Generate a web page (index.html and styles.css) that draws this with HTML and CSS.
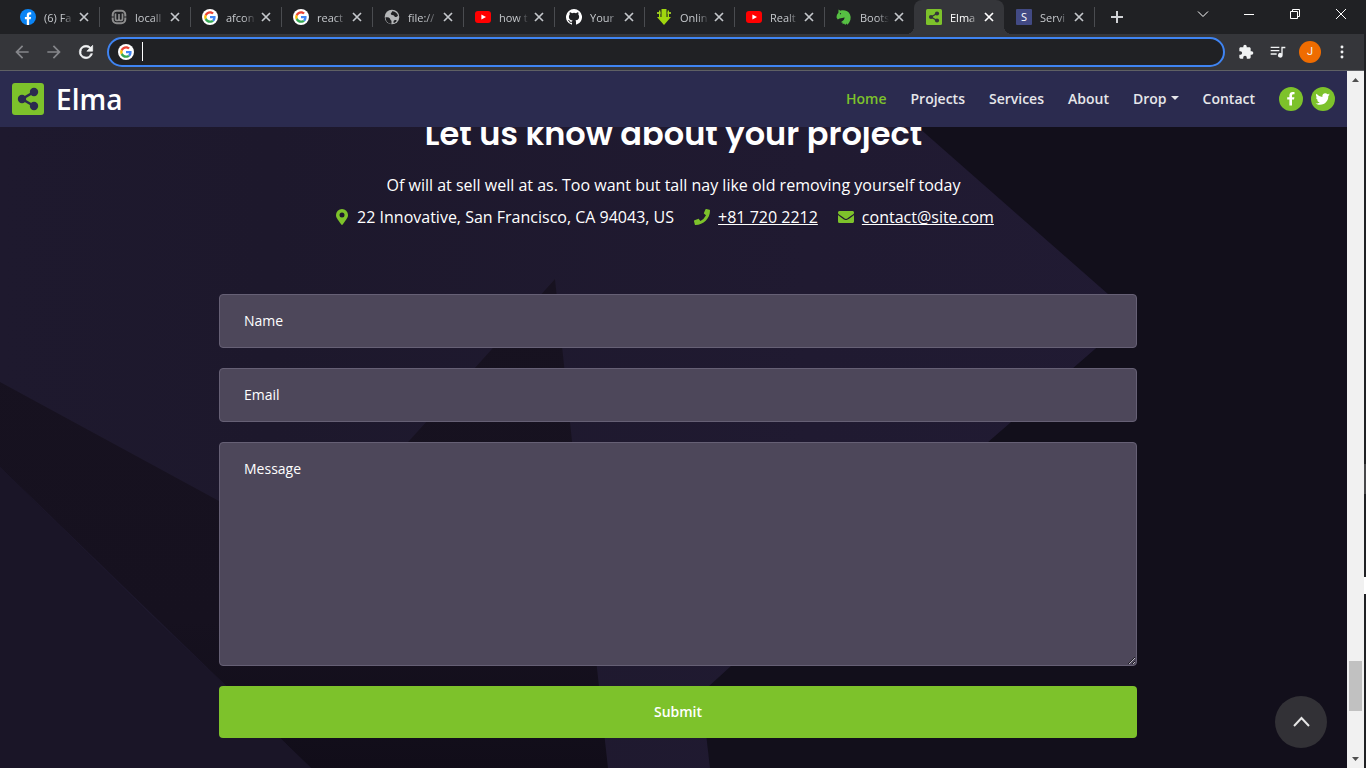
FILE: index.html
```html
<!DOCTYPE html>
<html lang="en">
<head>
<meta charset="utf-8">
<meta name="viewport" content="width=device-width, initial-scale=1">
<title>Elma</title>
<link rel="stylesheet" href="styles.css">
</head>
<body>
<svg class="sprite" aria-hidden="true">
  <symbol id="x" viewBox="0 0 10 10"><path d="M1 1l8 8M9 1l-8 8" fill="none" stroke="currentColor" stroke-width="1.7"/></symbol>
  <symbol id="google" viewBox="0 0 48 48">
    <circle cx="24" cy="24" r="24" fill="#fff"/>
    <g transform="translate(6.5 6.5) scale(.73)">
      <path fill="#EA4335" d="M24 9.5c3.54 0 6.71 1.22 9.21 3.6l6.85-6.85C35.9 2.38 30.47 0 24 0 14.62 0 6.51 5.38 2.56 13.22l7.98 6.19C12.43 13.72 17.74 9.5 24 9.5z"/>
      <path fill="#4285F4" d="M46.98 24.55c0-1.57-.15-3.09-.38-4.55H24v9.02h12.94c-.58 2.96-2.26 5.48-4.78 7.18l7.73 6c4.51-4.18 7.09-10.36 7.09-17.65z"/>
      <path fill="#FBBC05" d="M10.53 28.59c-.48-1.45-.76-2.99-.76-4.59s.27-3.14.76-4.59l-7.98-6.19C.92 16.46 0 20.12 0 24s.92 7.54 2.56 10.78l7.97-6.19z"/>
      <path fill="#34A853" d="M24 48c6.48 0 11.93-2.13 15.89-5.81l-7.73-6c-2.15 1.45-4.92 2.3-8.16 2.3-6.26 0-11.57-4.22-13.47-9.91l-7.98 6.19C6.51 42.62 14.62 48 24 48z"/>
    </g>
  </symbol>
  <symbol id="youtube" viewBox="0 0 16 16"><rect y="2" width="16" height="12" rx="3" fill="#f00"/><path d="M6.4 5.4v5.2L11 8z" fill="#fff"/></symbol>
  <symbol id="share" viewBox="0 0 32 32">
    <rect width="32" height="32" rx="3" fill="#7dc22b"/>
    <path d="M22 9L10 16l12 7" fill="none" stroke="currentColor" stroke-width="2.6"/>
    <circle cx="22" cy="9" r="4.2" fill="currentColor"/><circle cx="10" cy="16" r="4.2" fill="currentColor"/><circle cx="22" cy="23" r="4.2" fill="currentColor"/>
  </symbol>
</svg>

<div class="window">
  <div class="browser">
    <div class="tabstrip">
      <div class="tabs">
        <div class="tab"><svg class="favicon" viewBox="0 0 16 16"><circle cx="8" cy="8" r="8" fill="#0a84f5"/><path d="M6.8 16V10.300H4.900V8h1.900V6.300c0-2 1.100-3 2.900-3 .6 0 1.200.1 1.500.2v1.900h-.9c-.9 0-1.200.5-1.200 1.100V8h2l-.4 2.300H9.100V16z" fill="#fff"/></svg><span class="tab-title">(6) Fa</span><button class="tab-close" aria-label="Close tab"><svg><use href="#x"/></svg></button></div>
        <div class="tab"><svg class="favicon" viewBox="0 0 16 16" fill="none" stroke="#8d8d8d"><rect x="1.700" y="1.700" width="12.600" height="12.600" rx="4" stroke-width="2"/><path d="M0 8h3M13 8h3" stroke="#202124" stroke-width="1"/><path d="M4.500 4.500v5.200c0 1.400.8 1.800 1.800 1.800S8 11 8 9.700V5v4.700c0 1.300.7 1.800 1.700 1.800s1.800-.4 1.800-1.800V4.500" stroke-width="1.700"/></svg><span class="tab-title">locall</span><button class="tab-close" aria-label="Close tab"><svg><use href="#x"/></svg></button></div>
        <div class="tab"><svg class="favicon"><use href="#google"/></svg><span class="tab-title">afcon</span><button class="tab-close" aria-label="Close tab"><svg><use href="#x"/></svg></button></div>
        <div class="tab"><svg class="favicon"><use href="#google"/></svg><span class="tab-title">react</span><button class="tab-close" aria-label="Close tab"><svg><use href="#x"/></svg></button></div>
        <div class="tab"><svg class="favicon" viewBox="0 0 16 16"><circle cx="8" cy="8" r="7.300" fill="#b4b6b8"/><path d="M1.500 8.200c2.600 0 4.500.3 4.700 1.800.1 1.400 1.300 1 1.300 2.200v2.600C4 14.600 1.500 12 1.500 8.200zM8 2.200c3 0 5.200 1.700 6 4.300-1 1.200-1.600 1.800-2.800 1.400-1.300-.4-.6-1.400-2-1.700-1.500-.3-2.500-.6-2.400-1.700.1-.9 1.600-.8 1.200-2.300zM9.500 12.500c.2-1.200 1.500-1.700 2.500-1.400l.8.600c-.8 1.200-1.900 2-3.200 2.300z" fill="#202124"/></svg><span class="tab-title">file://</span><button class="tab-close" aria-label="Close tab"><svg><use href="#x"/></svg></button></div>
        <div class="tab"><svg class="favicon"><use href="#youtube"/></svg><span class="tab-title">how t</span><button class="tab-close" aria-label="Close tab"><svg><use href="#x"/></svg></button></div>
        <div class="tab"><svg class="favicon" viewBox="0 0 16 16"><path fill="#fff" d="M8 0a8 8 0 0 0-2.530 15.590c.4.070.55-.170.55-.380l-.01-1.490c-2.010.370-2.530-.490-2.690-.940-.090-.230-.480-.940-.820-1.130-.280-.150-.680-.520-.010-.530.630-.010 1.080.580 1.230.820.720 1.210 1.870.870 2.330.660.070-.520.280-.870.510-1.070-1.780-.200-3.640-.890-3.640-3.950 0-.870.310-1.590.820-2.150-.080-.200-.360-1.020.080-2.120 0 0 .670-.210 2.200.820a7.400 7.400 0 0 1 4 0c1.530-1.040 2.200-.820 2.200-.820.440 1.100.160 1.920.080 2.120.510.560.820 1.270.820 2.150 0 3.070-1.870 3.750-3.650 3.950.290.250.540.730.540 1.480l-.010 2.200c0 .210.150.460.550.380A8 8 0 0 0 8 0z"/></svg><span class="tab-title">Your</span><button class="tab-close" aria-label="Close tab"><svg><use href="#x"/></svg></button></div>
        <div class="tab"><svg class="favicon" viewBox="0 0 16 16"><path d="M5.500 0h5v8H15l-7 8-7-8h4.500z" fill="#a0d60f"/><path d="M1 4h3.500M11.500 4H15" stroke="#b9ec27" stroke-width="1.600"/><path d="M3.700 1.500V8M12.300 1.500V8" stroke="#a6dd10" stroke-width="1.400"/></svg><span class="tab-title">Onlin</span><button class="tab-close" aria-label="Close tab"><svg><use href="#x"/></svg></button></div>
        <div class="tab"><svg class="favicon"><use href="#youtube"/></svg><span class="tab-title">Realt</span><button class="tab-close" aria-label="Close tab"><svg><use href="#x"/></svg></button></div>
        <div class="tab tab-before"><svg class="favicon" viewBox="0 0 16 16"><path d="M2.500.5l2 1.200C8 .7 12.500 2 14 5.500c1.500 3.500.5 7-2.500 10.200l-1.200-1.200-1 1.500-1.300-1.500-1.300.8-.2-1.800-1.700-.2c2.700-1.500 3.800-3 3.700-5C7 9.300 5.200 9.200 3.500 9.400L1.800 10.500.6 8.700C.4 6.500 1.300 4.700 2.400 3.700z" fill="#56bf43"/><circle cx="4.500" cy="4.700" r=".6" fill="#202124"/></svg><span class="tab-title">Boots</span><button class="tab-close" aria-label="Close tab"><svg><use href="#x"/></svg></button></div>
        <div class="tab tab-active"><svg class="favicon"><use href="#share"/></svg><span class="tab-title">Elma</span><button class="tab-close" aria-label="Close tab"><svg><use href="#x"/></svg></button></div>
        <div class="tab"><span class="favicon favicon-s">S</span><span class="tab-title">Servi</span><button class="tab-close" aria-label="Close tab"><svg><use href="#x"/></svg></button></div>
      </div>
      <button class="new-tab" aria-label="New tab"><svg viewBox="0 0 12 12"><path d="M6 0v12M0 6h12" stroke="currentColor" stroke-width="2"/></svg></button>
      <div class="window-controls">
        <button aria-label="Search tabs"><svg viewBox="0 0 12 12"><path d="M1 3.500l5 5 5-5" fill="none" stroke="currentColor"/></svg></button>
        <button aria-label="Minimize"><svg viewBox="0 0 12 12"><path d="M1 6.500h10" stroke="currentColor"/></svg></button>
        <button aria-label="Restore"><svg viewBox="0 0 12 12"><path d="M1.500 3.500h7v7h-7zM3.500 3.500v-2h7v7h-2" fill="none" stroke="currentColor"/></svg></button>
        <button aria-label="Close"><svg viewBox="0 0 12 12"><path d="M1 1l10 10M11 1L1 11" stroke="currentColor"/></svg></button>
      </div>
    </div>
    <div class="toolbar">
      <button class="tool tool-off" aria-label="Back"><svg viewBox="0 0 24 24"><path d="M20 11H7.830l5.590-5.590L12 4l-8 8 8 8 1.410-1.410L7.830 13H20z"/></svg></button>
      <button class="tool tool-off" aria-label="Forward"><svg viewBox="0 0 24 24"><path d="M12 4l-1.410 1.410L16.170 11H4v2h12.170l-5.580 5.590L12 20l8-8z"/></svg></button>
      <button class="tool" aria-label="Reload"><svg viewBox="0 0 24 24"><path d="M17.650 6.350A7.960 7.960 0 0 0 12 4a8 8 0 1 0 7.730 10h-2.080A6 6 0 1 1 12 6c1.660 0 3.140.690 4.220 1.780L13 11h7V4z" stroke="currentColor" stroke-width=".8"/></svg></button>
      <div class="omnibox">
        <svg class="favicon"><use href="#google"/></svg>
        <span class="caret"></span>
        <input class="address" type="text" aria-label="Address and search bar">
      </div>
      <button class="tool tool-small" aria-label="Extensions"><svg viewBox="0 0 24 24"><path d="M20.500 11H19V7c0-1.100-.9-2-2-2h-4V3.500a2.500 2.500 0 0 0-5 0V5H4c-1.100 0-2 .9-2 2v3.800h1.500a2.700 2.700 0 0 1 0 5.400H2V20c0 1.100.9 2 2 2h3.800v-1.500a2.700 2.700 0 0 1 5.400 0V22H17c1.100 0 2-.9 2-2v-4h1.500a2.500 2.500 0 0 0 0-5z"/></svg></button>
      <button class="tool tool-small" aria-label="Media"><svg viewBox="0 0 24 24"><path d="M1 4h13v2H1zM1 9h13v2H1zM1 14h9v2H1zM17 4h6v2.500h-4V17a3.500 3.500 0 1 1-2-3.200z"/></svg></button>
      <button class="tool" aria-label="Profile"><span class="avatar">J</span></button>
      <button class="tool tool-small" aria-label="Menu"><svg viewBox="0 0 24 24"><circle cx="12" cy="4.500" r="2.200"/><circle cx="12" cy="12" r="2.200"/><circle cx="12" cy="19.500" r="2.200"/></svg></button>
    </div>
    <div class="viewport">
      <div class="page">
        <header class="navbar">
          <a class="brand" href="#home"><svg class="brand-logo"><use href="#share"/></svg>Elma</a>
          <nav class="nav">
            <a class="nav-link nav-current" href="#home">Home</a>
            <a class="nav-link" href="#projects">Projects</a>
            <a class="nav-link" href="#services">Services</a>
            <a class="nav-link" href="#about">About</a>
            <a class="nav-link nav-drop" href="#drop">Drop</a>
            <a class="nav-link" href="#contact">Contact</a>
          </nav>
          <div class="social">
            <a href="#facebook" aria-label="Facebook"><svg viewBox="0 0 24 24"><path d="M10.400 18.500v-5.900H8.200V10.200h2.200V8.300c0-2.200 1.300-3.400 3.200-3.400.9 0 1.900.2 1.900.2v2.100h-1.100c-1 0-1.400.6-1.400 1.300v1.700h2.400l-.4 2.400h-2v5.900z"/></svg></a>
            <a href="#twitter" aria-label="Twitter"><svg viewBox="0 0 24 24"><path d="M17.300 9v.4c0 3.900-2.900 8.300-8.300 8.300-1.600 0-3.200-.5-4.500-1.300 1.500.2 3.100-.3 4.300-1.200-1.300 0-2.400-.9-2.700-2 .4.100.9.100 1.300 0-1.400-.3-2.400-1.500-2.400-2.900.4.200.9.300 1.300.4-1.300-.9-1.700-2.600-.9-3.900a8.300 8.300 0 0 0 6 3.100c-.4-1.900 1-3.600 2.900-3.600.8 0 1.600.3 2.200.9.700-.1 1.300-.4 1.900-.7-.2.700-.7 1.300-1.300 1.600.6-.1 1.200-.2 1.700-.5-.4.600-.9 1.100-1.500 1.400z"/></svg></a>
          </div>
        </header>
        <main class="contact">
          <svg class="facets" viewBox="0 0 1347 641" preserveAspectRatio="none" aria-hidden="true">
            <defs>
              <linearGradient id="base" x1="0" y1="0" x2="1" y2="0"><stop offset="0" stop-color="#1e192e"/><stop offset=".2" stop-color="#1d182c"/><stop offset=".6" stop-color="#201a31"/><stop offset="1" stop-color="#211b34"/></linearGradient>
              <linearGradient id="spike" x1="0" y1="0" x2="0" y2="1"><stop offset="0" stop-color="#171220"/><stop offset=".7" stop-color="#16111f"/><stop offset="1" stop-color="#110d19"/></linearGradient>
            </defs>
            <rect width="1347" height="641" fill="url(#base)"/>
            <path d="M918 0L1133 189 731 539 707 561 703 580 710 641H1347V0z" fill="#120f1b"/>
            <path d="M0 255L219 374 300 418 409 314 555 152 572 314 608 641H311L0 340z" fill="url(#spike)"/>
            <path d="M0 340L152 489 224 557 311 641H0z" fill="#1a1527"/>
          </svg>
          <div class="intro">
            <h2 class="title">Let us know about your project</h2>
            <p class="lead">Of will at sell well at as. Too want but tall nay like old removing yourself today</p>
            <ul class="details">
              <li><svg viewBox="0 0 16 16"><path fill-rule="evenodd" d="M9 0a6 6 0 0 0-6 6c0 2.500.9 3.200 5.300 9.600.3.500 1.100.5 1.400 0C14.100 9.200 15 8.500 15 6a6 6 0 0 0-6-6zm0 3.500a2.500 2.500 0 1 1 0 5 2.500 2.500 0 0 1 0-5z"/></svg><span>22 Innovative, San Francisco, CA 94043, US</span></li>
              <li><svg viewBox="0 0 16 16"><path d="M15.500.8l-3.200-.8c-.4-.1-.7.100-.9.400L9.900 3.900c-.1.300 0 .7.200.9L12 6.300A11.600 11.600 0 0 1 6.400 11.900L4.800 10.100c-.2-.3-.6-.4-.9-.2L.5 11.300c-.4.200-.6.500-.5.900l.8 3.200c.1.400.4.600.7.600C9.500 16 16 9.500 16 1.500c0-.3-.2-.6-.5-.7z"/></svg><a href="tel:+817202212">+81 720 2212</a></li>
              <li><svg viewBox="0 0 16 16"><path d="M15.700 6.300c.1-.1.300 0 .3.200v6c0 .8-.7 1.500-1.500 1.500h-13A1.500 1.500 0 0 1 0 12.500v-6c0-.2.200-.3.300-.2 4.600 3.500 6 4.700 7.700 4.700s3.200-1.300 7.700-4.700zM8 10c1 0 2.500-1.300 3.300-1.900C15.500 5 16 4.600 16 4.200v-.7c0-.8-.7-1.500-1.500-1.500h-13C.7 2 0 2.700 0 3.500v.7c0 .4.500.8 4.700 3.900C5.500 8.700 7 10 8 10z"/></svg><a href="mailto:contact@site.com">contact@site.com</a></li>
            </ul>
          </div>
          <form class="form">
            <input class="field" type="text" aria-label="Name" placeholder="Name">
            <input class="field" type="email" aria-label="Email" placeholder="Email">
            <textarea class="field field-area" aria-label="Message" placeholder="Message"></textarea>
            <button class="submit" type="submit">Submit</button>
          </form>
          <a class="to-top" href="#home" aria-label="Back to top"><svg viewBox="0 0 18 18"><path d="M2 13l7.500-8L17 13" fill="none" stroke="#e6e6e6" stroke-width="2"/></svg></a>
        </main>
      </div>
      <div class="scrollbar" aria-hidden="true">
        <svg viewBox="0 0 17 17"><path d="M5 11l3.500-4 3.500 4z" fill="#505050"/></svg>
        <div class="track"><div class="thumb"></div></div>
        <svg viewBox="0 0 17 17"><path d="M5 6l3.500 4L12 6z" fill="#505050"/></svg>
      </div>
    </div>
  </div>
  <div class="edge" aria-hidden="true"></div>
</div>
</body>
</html>
```
FILE: styles.css
```css
*, *::before, *::after { box-sizing: border-box; }

body {
  margin: 0;
  height: 100vh;
  overflow: hidden;
  background: #202124;
  font-family: "Open Sans", "Noto Sans", sans-serif;
  color: #fff;
}

button {
  border: 0;
  padding: 0;
  background: none;
  color: inherit;
  font: inherit;
  cursor: pointer;
}

a { color: inherit; }

.sprite { position: absolute; width: 0; height: 0; }

.window { display: flex; height: 100vh; }

.browser {
  flex: 1;
  min-width: 0;
  display: flex;
  flex-direction: column;
}

/* Slivers of the windows behind, visible past the right border */
.edge {
  width: 2px;
  background: linear-gradient(#202124 464px, #48484a 464px 494px, #202124 494px 577px, #fff 577px 594px, #202124 594px);
}

/* Tab strip */
.tabstrip {
  display: flex;
  height: 34px;
  padding-left: 8px;
  background: #202124;
}

.tabs { display: flex; flex: 0 1 1086px; min-width: 0; }

.tab {
  position: relative;
  flex: 0 1 90px;
  min-width: 0;
  display: flex;
  align-items: center;
  gap: 8px;
  padding: 0 10px 0 12px;
  font-size: 11px;
  color: #c6c9cd;
}

.tab:nth-child(-n+6) { flex-basis: 91px; }

.tab::after {
  content: "";
  position: absolute;
  right: -1px;
  top: 7px;
  width: 1px;
  height: 20px;
  background: #4a4c50;
}

.tab-before::after { display: none; }

.favicon { flex: none; width: 16px; height: 16px; }

.favicon-s {
  border-radius: 1px;
  background: #424a84;
  color: #fff;
  line-height: 16px;
  text-align: center;
}

.tab-title {
  flex: 1;
  min-width: 0;
  margin-right: -3px;
  overflow: hidden;
  white-space: nowrap;
  mask-image: linear-gradient(90deg, #000 60%, transparent);
}

.tab-close { flex: none; width: 10px; height: 10px; color: #c4c7cb; }
.tab-close svg { display: block; width: 10px; height: 10px; }

.tab-active {
  border-radius: 8px 8px 0 0;
  background: #35363a;
  color: #fff;
}
.tab-active .favicon { color: #35363a; }
.tab-active .tab-close { color: #fff; }
.tab-active::before,
.tab-active::after {
  content: "";
  position: absolute;
  top: auto;
  bottom: 0;
  width: 8px;
  height: 8px;
}
.tab-active::before { left: -8px; background: radial-gradient(circle at 0 0, #202124 8px, #35363a 8px); }
.tab-active::after { right: -8px; background: radial-gradient(circle at 100% 0, #202124 8px, #35363a 8px); }

.new-tab { width: 28px; margin-left: 9px; color: #d0d2d5; }
.new-tab svg { display: block; width: 12px; height: 12px; margin: auto; }

.window-controls { display: flex; height: 28px; margin-left: auto; }
.window-controls button { width: 46px; }
.window-controls svg { display: block; width: 12px; height: 12px; margin: auto; }

/* Toolbar */
.toolbar {
  display: flex;
  align-items: center;
  height: 37px;
  padding: 0 6px;
  border-bottom: 1px solid #5f6064;
  background: #35363a;
}

.tool {
  width: 32px;
  height: 32px;
  display: grid;
  place-items: center;
  color: #f1f3f4;
}
.tool svg { width: 20px; height: 20px; fill: currentColor; }
.tool-small svg { width: 16px; height: 16px; }
.tool-off { color: #85868a; }

.avatar {
  width: 22px;
  height: 22px;
  border-radius: 50%;
  background: #ef6c00;
  font: 11px/22px Roboto, sans-serif;
}

.omnibox {
  flex: 1;
  display: flex;
  align-items: center;
  gap: 8px;
  height: 30px;
  margin: 0 5px;
  padding: 0 9px;
  border: 2px solid #3f84f2;
  border-radius: 15px;
  background: #202124;
}

.caret { width: 1px; height: 19px; margin-bottom: 2px; background: #fff; }

.address {
  flex: 1;
  border: 0;
  padding: 0;
  background: transparent;
  color: #fff;
  font: 14px "Open Sans", sans-serif;
  outline: 0;
}

/* Page */
.viewport { flex: 1; min-height: 0; display: flex; }

.page {
  position: relative;
  flex: 1;
  min-width: 0;
  display: flex;
  flex-direction: column;
}

.navbar {
  flex: none;
  display: flex;
  align-items: center;
  gap: 24px;
  height: 56px;
  padding: 0 12px;
  background: #2b2b4f;
}

.brand {
  display: flex;
  align-items: center;
  gap: 12px;
  margin-right: auto;
  font-size: 28px;
  font-weight: 600;
  line-height: 32px;
  text-decoration: none;
}
.brand-logo { width: 32px; height: 32px; color: #2b2b4f; }

.nav { display: flex; gap: 24px; }
.nav-link {
  font-size: 14px;
  font-weight: 600;
  line-height: 20px;
  color: #e6e6ea;
  text-decoration: none;
}
.nav-current { color: #7dc22b; }
.nav-drop::after {
  content: "";
  display: inline-block;
  margin-left: 4px;
  vertical-align: 4px;
  border: 4px solid transparent;
  border-top-color: currentColor;
  border-bottom: 0;
}

.social { display: flex; gap: 8px; }
.social a {
  width: 24px;
  height: 24px;
  border-radius: 50%;
  background: #7dc22b;
}
.social svg { display: block; fill: #fff; }

.contact {
  position: relative;
  flex: 1;
  min-height: 0;
  overflow: hidden;
  display: flex;
  flex-direction: column;
}

.facets { position: absolute; inset: 0; width: 100%; height: 100%; }

.intro {
  position: relative;
  margin-top: -13px;
  text-align: center;
}

.title {
  margin: 0 0 15px;
  font-family: Poppins, Inter, sans-serif;
  font-size: 32px;
  font-weight: 600;
  line-height: 40px;
}

.lead { margin: 0; font-size: 16px; line-height: 32px; }

.details {
  display: flex;
  justify-content: center;
  gap: 20px;
  margin: 0;
  padding: 0 20px 0 0;
  list-style: none;
  font-size: 16px;
  line-height: 32px;
}
.details li { display: flex; align-items: center; gap: 8px; }
.details svg { width: 16px; height: 16px; fill: #7dc22b; }

.form {
  position: relative;
  display: flex;
  flex-direction: column;
  gap: 20px;
  width: 100%;
  max-width: 927px;
  margin: 61px auto 0;
  padding-left: 9px;
}

.field {
  display: block;
  width: 100%;
  height: 54px;
  margin: 0;
  padding: 15px 24px 17px;
  border: 1px solid #666075;
  border-radius: 4px;
  background: #4d475a;
  color: #fff;
  font: 14px/20px "Open Sans", sans-serif;
}
.field::placeholder { color: #fff; opacity: 1; }
.field-area { height: 224px; padding-top: 16px; resize: vertical; }

.submit {
  height: 52px;
  padding-bottom: 2px;
  border-radius: 4px;
  background: #7dc22b;
  font-size: 14px;
  font-weight: 600;
}

.to-top {
  position: absolute;
  right: 20px;
  bottom: 20px;
  width: 52px;
  height: 52px;
  border-radius: 50%;
  background: #323136;
  display: grid;
  place-items: center;
}
.to-top svg { width: 18px; height: 18px; }

.scrollbar {
  width: 17px;
  display: flex;
  flex-direction: column;
  background: #f1f1f1;
}
.scrollbar svg { width: 17px; height: 17px; }
.track {
  flex: 1;
  display: flex;
  flex-direction: column;
  justify-content: flex-end;
  padding: 0 2px 40px;
}
.thumb { height: 50px; background: #c1c1c1; }
```
